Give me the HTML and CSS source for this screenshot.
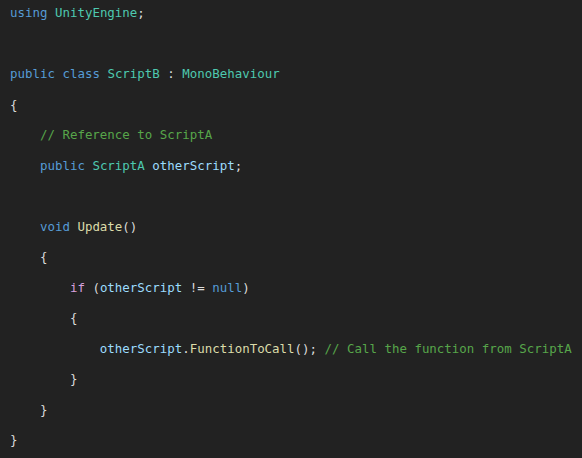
FILE: index.html
```html
<!DOCTYPE html>
<html>
<head>
<meta charset="utf-8">
<link rel="stylesheet" href="styles.css">
</head>
<body>
<pre class="code"><span class="kw">using</span> <span class="ty">UnityEngine</span>;

<span class="kw">public</span> <span class="kw">class</span> <span class="ty">ScriptB</span> : <span class="ty">MonoBehaviour</span>
{
    <span class="cm">// Reference to ScriptA</span>
    <span class="kw">public</span> <span class="ty">ScriptA</span> <span class="var">otherScript</span>;

    <span class="kw">void</span> <span class="fn">Update</span>()
    {
        <span class="ctl">if</span> (<span class="var">otherScript</span> != <span class="kw">null</span>)
        {
            <span class="var">otherScript</span>.<span class="fn">FunctionToCall</span>(); <span class="cm">// Call the function from ScriptA</span>
        }
    }
}</pre>
</body>
</html>
```
FILE: styles.css
```css
html, body {
  margin: 0;
  padding: 0;
  background: #222222;
  height: 100%;
  overflow: hidden;
}
.code {
  margin: -2px 0 0 0;
  padding: 0 0 0 10px;
  font-family: "DejaVu Sans Mono", "Liberation Mono", monospace;
  font-size: 12.45px;
  line-height: 30.5px;
  color: #dcdcdc;
  white-space: pre;
}
.kw { color: #569cd6; }
.ty { color: #4ec9b0; }
.cm { color: #57a64a; }
.var { color: #9cdcfe; }
.fn { color: #dcdcaa; }
.ctl { color: #d8a0df; }
```
